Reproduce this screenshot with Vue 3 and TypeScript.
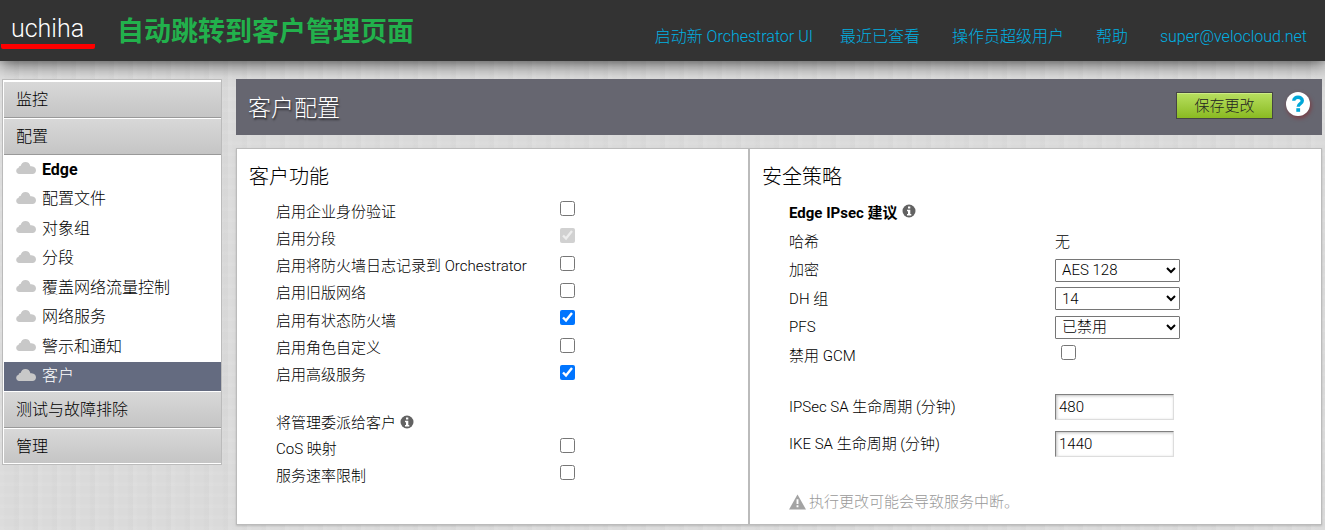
<script setup lang="ts">
import { ref } from 'vue'

interface Feature {
  id: string
  label: string
  checked: boolean
  disabled?: boolean
}

const topLinks = ['启动新 Orchestrator UI', '最近已查看', '操作员超级用户', '帮助', 'super@velocloud.net']
const configLinks = ['Edge', '配置文件', '对象组', '分段', '覆盖网络流量控制', '网络服务', '警示和通知', '客户']
const activeLink = ref('客户')

const features = ref<Feature[]>([
  { id: 'enterprise-auth', label: '启用企业身份验证', checked: false },
  { id: 'segmentation', label: '启用分段', checked: true, disabled: true },
  { id: 'firewall-log', label: '启用将防火墙日志记录到 Orchestrator', checked: false },
  { id: 'legacy-network', label: '启用旧版网络', checked: false },
  { id: 'stateful-firewall', label: '启用有状态防火墙', checked: true },
  { id: 'role-custom', label: '启用角色自定义', checked: false },
  { id: 'premium-service', label: '启用高级服务', checked: true },
])

const delegated = ref<Feature[]>([
  { id: 'cos', label: 'CoS 映射', checked: false },
  { id: 'rate-limit', label: '服务速率限制', checked: false },
])

const encryption = ref('AES 128')
const dhGroup = ref('14')
const pfs = ref('已禁用')
const disableGcm = ref(false)
const ipsecLifetime = ref('480')
const ikeLifetime = ref('1440')
</script>

<template>
  <div class="page">
    <header class="topbar">
      <a class="brand" href="#">uchiha</a>
      <span class="note">自动跳转到客户管理页面</span>
      <nav class="topnav">
        <a v-for="link in topLinks" :key="link" href="#">{{ link }}</a>
      </nav>
    </header>

    <div class="body">
      <nav class="sidebar">
        <a class="section" href="#">监控</a>
        <a class="section" href="#">配置</a>
        <div class="sublinks">
          <a
            v-for="link in configLinks"
            :key="link"
            href="#"
            :class="{ active: link === activeLink, strong: link === 'Edge' }"
            @click.prevent="activeLink = link"
          >
            <svg class="cloud" viewBox="0 0 20 12" aria-hidden="true">
              <path d="M3.2 12a3.2 3.2 0 0 1-.6-6.300C2.900 4.500 3.700 3.900 4.800 3.800 5.300 1.500 7 0 9.400 0c2.600 0 4.500 1.600 5 4.200C17.500 4.200 20 5.600 20 8.300 20 10.700 18.600 12 16.500 12z" />
            </svg>
            <span>{{ link }}</span>
          </a>
        </div>
        <a class="section" href="#">测试与故障排除</a>
        <a class="section last" href="#">管理</a>
      </nav>

      <main class="main">
        <div class="titlebar">
          <h1>客户配置</h1>
          <button class="save" type="button">保存更改</button>
          <button class="help" type="button" aria-label="帮助">
            <svg viewBox="0 0 24 24" aria-hidden="true">
              <circle cx="12" cy="12" r="12" fill="#fff" />
              <path d="M7.800 8.800C7.800 3.900 16.300 4.300 16.300 8.700c0 3-4.100 2.700-4.100 6" fill="none" stroke="#00a7d8" stroke-width="3.400" />
              <rect x="10.300" y="16.200" width="3.800" height="3.600" fill="#00a7d8" />
            </svg>
          </button>
        </div>

        <div class="panels">
          <section class="panel">
            <h2>客户功能</h2>
            <div class="features">
              <div v-for="item in features" :key="item.id" class="feature">
                <label :for="item.id">{{ item.label }}</label>
                <input :id="item.id" v-model="item.checked" type="checkbox" :disabled="item.disabled" />
              </div>
            </div>
            <div class="features delegated">
              <h3>
                将管理委派给客户
                <svg class="info" viewBox="0 0 14 14" aria-hidden="true">
                  <circle cx="7" cy="7" r="6.500" fill="#626262" />
                  <path d="M6 2.500h2.300v2H6zM5 5.800h3.300v4.200h1v1.500H5V10h1V7.300H5z" fill="#fff" />
                </svg>
              </h3>
              <div v-for="item in delegated" :key="item.id" class="feature">
                <label :for="item.id">{{ item.label }}</label>
                <input :id="item.id" v-model="item.checked" type="checkbox" />
              </div>
            </div>
          </section>

          <section class="panel">
            <h2>安全策略</h2>
            <div class="policy proposal">
              <h3 class="strong">
                Edge IPsec 建议
                <svg class="info" viewBox="0 0 14 14" aria-hidden="true">
                  <circle cx="7" cy="7" r="6.500" fill="#626262" />
                  <path d="M6 2.500h2.300v2H6zM5 5.800h3.300v4.200h1v1.500H5V10h1V7.300H5z" fill="#fff" />
                </svg>
              </h3>
              <div class="row"><span>哈希</span><span>无</span></div>
              <div class="row">
                <label for="encryption">加密</label>
                <select id="encryption" v-model="encryption">
                  <option>AES 128</option>
                  <option>AES 256</option>
                </select>
              </div>
              <div class="row">
                <label for="dh">DH 组</label>
                <select id="dh" v-model="dhGroup">
                  <option>2</option>
                  <option>5</option>
                  <option>14</option>
                </select>
              </div>
              <div class="row">
                <label for="pfs">PFS</label>
                <select id="pfs" v-model="pfs">
                  <option>已禁用</option>
                  <option>2</option>
                  <option>5</option>
                </select>
              </div>
              <div class="row check">
                <label for="gcm">禁用 GCM</label>
                <input id="gcm" v-model="disableGcm" type="checkbox" />
              </div>
            </div>
            <div class="policy lifetimes">
              <div class="row">
                <label for="ipsec">IPSec SA 生命周期 (分钟)</label>
                <input id="ipsec" v-model="ipsecLifetime" type="text" />
              </div>
              <div class="row">
                <label for="ike">IKE SA 生命周期 (分钟)</label>
                <input id="ike" v-model="ikeLifetime" type="text" />
              </div>
            </div>
            <p class="warning">
              <svg viewBox="0 0 18 16" aria-hidden="true">
                <path d="M9 0 18 16H0z" fill="#a3a3a3" />
                <path d="M8 5h2v5H8zM8 11.500h2v2H8z" fill="#fff" />
              </svg>
              执行更改可能会导致服务中断。
            </p>
          </section>
        </div>
      </main>
    </div>
  </div>
</template>

<style>
body {
  background: #d9d9d9;
}
</style>

<style scoped>
.page {
  min-height: 100vh;
  box-sizing: border-box;
  font-family: Roboto, "Noto Sans CJK SC", sans-serif;
  font-weight: 300;
  font-size: 15px;
  color: #000;
  background:
    repeating-linear-gradient(90deg, rgba(255, 255, 255, 0.06) 0 3px, transparent 5px 13px, rgba(0, 0, 0, 0.01) 15px 19px),
    repeating-linear-gradient(0deg, rgba(255, 255, 255, 0.05) 0 3px, transparent 5px 11px),
    #dadada;
}

.page * {
  box-sizing: border-box;
}

a {
  text-decoration: none;
  color: inherit;
}

h1,
h2,
h3,
p {
  margin: 0;
  font-weight: inherit;
}

.topbar {
  display: flex;
  height: 61px;
  padding: 0 18px 0 1px;
  background: #333;
  box-shadow: 0 2px 16px rgba(0, 0, 0, 0.7);
}

.brand {
  align-self: flex-start;
  width: 94px;
  margin-top: 14px;
  padding-left: 10px;
  border-bottom: 5px solid #f00;
  border-radius: 2px;
  color: #fff;
  font-size: 25px;
  line-height: 30px;
}

.note {
  padding-left: 22px;
  color: #22b14c;
  font-size: 27px;
  font-weight: 700;
  line-height: 64px;
  white-space: nowrap;
}

.topnav {
  display: flex;
  gap: 27px;
  margin-left: auto;
  padding-top: 26px;
  color: #00b0e2;
  font-size: 16px;
  line-height: 22px;
  white-space: nowrap;
}

.topnav a:nth-child(n + 3) {
  margin-left: 5px;
}

.body {
  display: flex;
  align-items: flex-start;
  gap: 14px;
  padding: 18px 3px 5px 2px;
}

.sidebar {
  flex: none;
  width: 220px;
  padding: 0 0 0 1px;
  border: 1px solid #bbb;
  background: #fff;
  font-size: 16px;
}

.section {
  display: block;
  height: 37px;
  padding-left: 12px;
  border-top: 1px solid #fff;
  border-bottom: 1px solid #999;
  background: linear-gradient(#d8d8d8, #c5c5c5);
  line-height: 36px;
}

.section:first-child {
  height: 38px;
  border-top-width: 2px;
}

.section.last {
  height: 36px;
  border-bottom-color: #fff;
}

.sublinks {
  display: grid;
  min-height: 236px;
}

.sublinks a {
  display: flex;
  align-items: center;
  gap: 6px;
  padding-left: 12px;
  line-height: 24px;
}

.sublinks .active {
  background: #646b80;
  color: #fff;
}

.strong,
.sublinks .strong {
  font-weight: 700;
}

.cloud {
  width: 20px;
  height: 12px;
  margin-bottom: 3px;
  fill: #c8c8c8;
}

.main {
  flex: 1;
  min-width: 0;
}

.titlebar {
  display: flex;
  align-items: center;
  height: 56px;
  padding: 0 12px;
  background: #666670;
}

h1 {
  flex: 1;
  color: #fff;
  font-size: 23px;
  line-height: 30px;
  padding-top: 4px;
  text-shadow: 1px 2px 2px rgba(0, 0, 0, 0.6);
}

.save {
  width: 97px;
  height: 27px;
  margin-right: 13px;
  margin-bottom: 3px;
  padding: 0;
  border: 1px solid #454545;
  background: linear-gradient(#b8e060, #8aba22);
  box-shadow: inset 0 1px #cdec86;
  color: #222;
  font: inherit;
  line-height: 24px;
}

.help {
  width: 24px;
  height: 24px;
  margin-bottom: 6px;
  padding: 0;
  border: 0;
  border-radius: 50%;
  background: none;
  box-shadow: 1px 2px 4px #7d3a40;
}

.help svg {
  display: block;
}

.panels {
  display: grid;
  grid-template-columns: 512fr 574fr;
  margin-top: 13px;
  border: 1px solid #bbb;
  background: #fff;
  box-shadow: 0 1px 2px rgba(0, 0, 0, 0.15);
}

.panel {
  min-height: 375px;
  padding: 14px 12px 9px;
}

.panel + .panel {
  border-left: 2px solid #bbb;
}

h2 {
  font-size: 20px;
  line-height: 28px;
}

h3 {
  display: flex;
  align-items: center;
  gap: 4px;
  font-size: 15px;
}

.info {
  width: 14px;
  height: 14px;
}

.features {
  display: grid;
  grid-auto-rows: 1fr;
  min-height: 191px;
  margin-top: 7px;
  padding-left: 27px;
}

.delegated {
  min-height: 81px;
  margin-top: 19px;
}

.feature {
  display: grid;
  grid-template-columns: 284px 1fr;
  align-items: center;
  line-height: 24px;
}

input[type='checkbox'] {
  width: 15px;
  height: 15px;
  margin: 0 0 6px;
}

.policy {
  display: grid;
  padding-left: 27px;
}

.proposal {
  min-height: 173px;
  margin-top: 6px;
}

.policy h3 {
  min-height: 30px;
  padding-bottom: 2px;
}

.row {
  display: grid;
  grid-template-columns: 266px 125px;
  align-items: center;
  min-height: 28px;
  line-height: 24px;
}

.check input {
  margin-left: 6px;
}

select {
  width: 125px;
  height: 23px;
  padding: 0 2px;
  border: 1px solid #767676;
  border-radius: 1px;
  background: #fff;
  color: #000;
  font: inherit;
}

input[type='text'] {
  width: 119px;
  height: 26px;
  padding: 0 3px;
  border: 1px solid #ddd;
  border-top-color: #808080;
  border-left-color: #808080;
  box-shadow: inset 1px 1px 3px rgba(0, 0, 0, 0.25);
  color: #000;
  font: inherit;
}

.lifetimes {
  margin-top: 18px;
}

.lifetimes .row {
  min-height: 37px;
}

.warning {
  display: flex;
  align-items: center;
  gap: 3px;
  margin-top: 28px;
  padding-left: 27px;
  color: #999;
  line-height: 24px;
}

.warning svg {
  width: 17px;
  height: 16px;
}
</style>
